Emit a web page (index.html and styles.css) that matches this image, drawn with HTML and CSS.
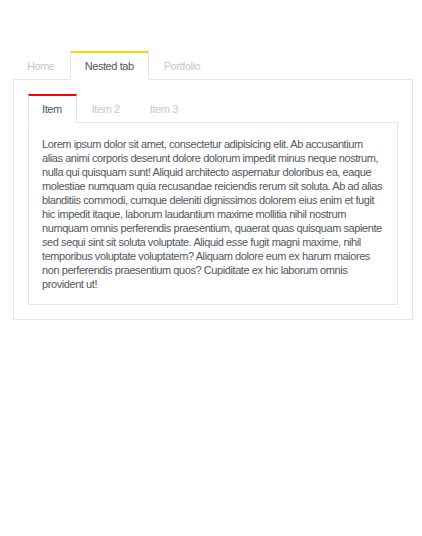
FILE: index.html
```html
<!DOCTYPE html>
<html>
<head>
<meta charset="utf-8">
<link rel="stylesheet" href="styles.css">
</head>
<body>
<div class="page">
  <ul class="tabs tabs-outer">
    <li class="tab">Home</li>
    <li class="tab active">Nested tab</li>
    <li class="tab">Portfolio</li>
  </ul>
  <div class="panel panel-outer">
    <ul class="tabs tabs-inner">
      <li class="tab active">Item</li>
      <li class="tab">Item 2</li>
      <li class="tab">Item 3</li>
    </ul>
    <div class="panel panel-inner">
      <p class="text">Lorem ipsum dolor sit amet, consectetur adipisicing elit. Ab accusantium alias animi corporis deserunt dolore dolorum impedit minus neque nostrum, nulla qui quisquam sunt! Aliquid architecto aspernatur doloribus ea, eaque molestiae numquam quia recusandae reiciendis rerum sit soluta. Ab ad alias blanditiis commodi, cumque deleniti dignissimos dolorem eius enim et fugit hic impedit itaque, laborum laudantium maxime mollitia nihil nostrum numquam omnis perferendis praesentium, quaerat quas quisquam sapiente sed sequi sint sit soluta voluptate. Aliquid esse fugit magni maxime, nihil temporibus voluptate voluptatem? Aliquam dolore eum ex harum maiores non perferendis praesentium quos? Cupiditate ex hic laborum omnis provident ut!</p>
    </div>
  </div>
</div>
</body>
</html>
```

FILE: styles.css
```css
html, body {
  margin: 0;
  padding: 0;
  background: #ffffff;
}
body {
  font-family: "Liberation Sans", Arial, sans-serif;
  font-size: 11px;
  letter-spacing: -0.42px;
  color: #525860;
}
.page {
  padding: 51px 9px 0 13px;
}
.tabs {
  list-style: none;
  margin: 0;
  padding: 0;
  display: flex;
  border-bottom: 1px solid #e6e6e6;
}
.tab {
  box-sizing: border-box;
  height: 29px;
  padding: 0 14px 1px;
  display: flex;
  align-items: center;
  border-top: 2px solid transparent;
  border-left: 1px solid transparent;
  border-right: 1px solid transparent;
  color: #c8c8c8;
  margin-bottom: -1px;
}
.tab:first-child {
  padding-left: 13px;
}
.tab.active {
  color: #525860;
  background: #ffffff;
  border-left-color: #e6e6e6;
  border-right-color: #e6e6e6;
  border-bottom: 1px solid #ffffff;
}
.tabs-outer .tab.active {
  border-top-color: #ffd400;
}
.tabs-inner .tab.active {
  border-top-color: #ff0000;
}
.panel {
  border: 1px solid #e6e6e6;
  border-top: none;
}
.panel-outer {
  padding: 14px;
}
.panel-inner {
  padding: 14px 14px 13px 13px;
}
.text {
  margin: 0;
  line-height: 14px;
}
```
